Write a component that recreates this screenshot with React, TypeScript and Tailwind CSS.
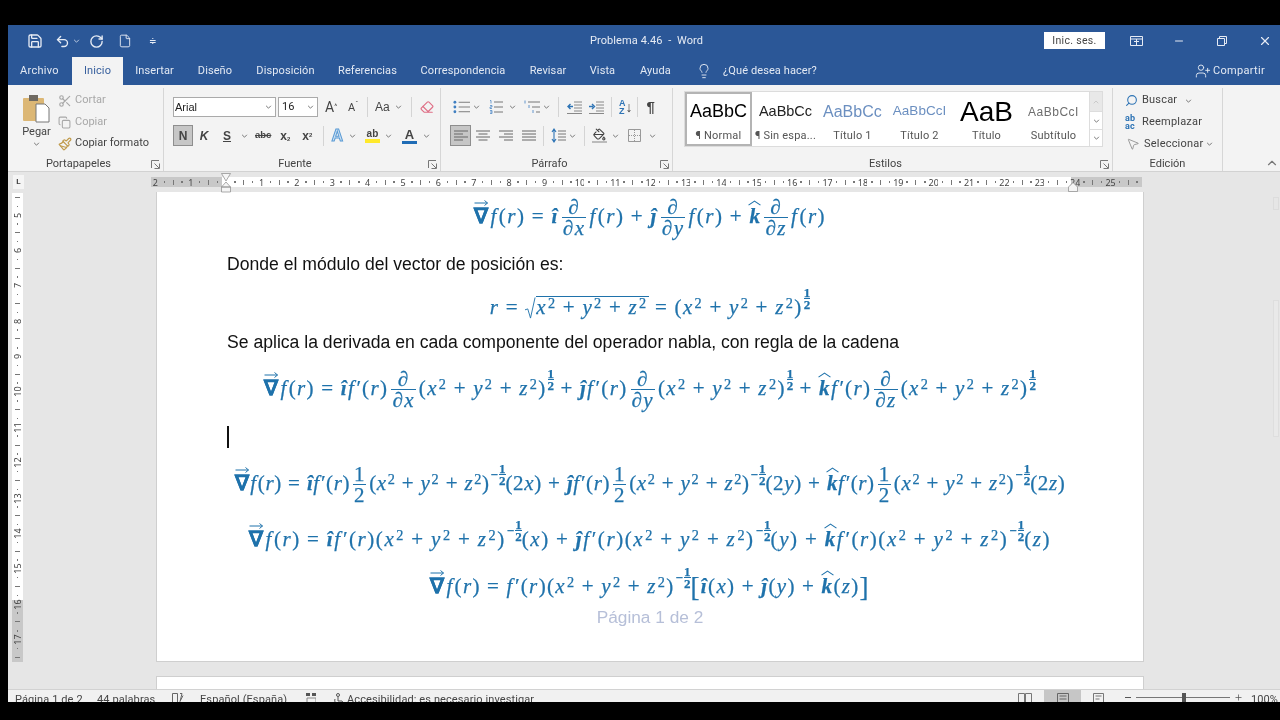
import React from "react";
import { Save, Undo2, RotateCcw, File, ChevronUp, Minus, Plus, X, Lightbulb, UserPlus, Scissors, Copy, Paintbrush, Eraser, PaintBucket, Search, MousePointer2 } from "lucide-react";

const Caret = ({ className = "" }: { className?: string }) => (
  <svg viewBox="0 0 8 5" className={"w-[7px] h-[4px] shrink-0 text-[#666] " + className} fill="none" stroke="currentColor" strokeWidth="1.1"><path d="M1 1l3 3 3-3" /></svg>
);
const Sep = ({ className = "" }: { className?: string }) => <span className={"w-px h-[20px] bg-[#d4d4d4] shrink-0 " + className} />;
const Launcher = () => (
  <svg viewBox="0 0 9 9" className="w-[9px] h-[9px] text-[#777]" fill="none" stroke="currentColor" strokeWidth="1"><path d="M.5 8V.5H8M8.5 8.5h-5M8.5 8.5v-5M8 8L3.5 3.5" /></svg>
);

const Group = ({ w, label, launch = true, children }: { w: string; label: string; launch?: boolean; children: React.ReactNode }) => (
  <div className={"flex flex-col h-[83px] shrink-0 border-r border-[#d6d6d6] mt-[3px] " + w}>
    <div className="h-[69px] min-h-0">{children}</div>
    <div className={"h-[14px] flex items-center relative text-[11px] text-[#444] justify-center " + (launch ? "pr-[14px]" : "")}>
      {label}
      {launch && <span className="absolute right-[3px] top-[3px]"><Launcher /></span>}
    </div>
  </div>
);

const Tab = ({ children, className = "" }: { children: React.ReactNode; className?: string }) => (
  <div className={"h-full flex items-center justify-center text-[11px] tracking-[0.1px] text-[#e3e9f3] shrink-0 " + className}>{children}</div>
);

const Bullets = () => (
  <svg viewBox="0 0 18 14" className="w-[17px] h-[14px]"><g fill="#3f7fc1"><circle cx="2" cy="2" r="1.5" /><circle cx="2" cy="7" r="1.5" /><circle cx="2" cy="12" r="1.5" /></g><path d="M6 2h12M6 7h12M6 12h12" stroke="#777" strokeWidth="1" /></svg>
);
const Numbered = () => (
  <svg viewBox="0 0 14 14" className="w-[14px] h-[14px]"><path d="M1 .5h1v3M1 5.5h2v1.500H1v1.500h2M1 10.5h2v3H1M1 12h2" stroke="#3f7fc1" strokeWidth=".7" fill="none" /><path d="M5 2h9M5 7h9M5 12h9" stroke="#777" strokeWidth="1" /></svg>
);
const Multi = () => (
  <svg viewBox="0 0 16 14" className="w-[16px] h-[14px]"><path d="M1 .5v3M5 5v3M9 10v3" stroke="#3f7fc1" strokeWidth=".8" /><path d="M4 2h12M8 7h8M12 12h4" stroke="#777" strokeWidth="1" /></svg>
);
const Indent = ({ inc }: { inc?: boolean }) => (
  <svg viewBox="0 0 16 13" className="w-[16px] h-[13px]"><path d="M8 1h8M8 4h8M8 7h8M8 10h8M1 12.500h15" stroke="#888" strokeWidth="1" /><path d={inc ? "M1 5.500h4M4 3l2.500 2.500L4 8" : "M7 5.500H2M4.500 3L2 5.500 4.500 8"} stroke="#2e74b5" strokeWidth="1.4" fill="none" /></svg>
);
const Align = ({ d }: { d: string }) => (
  <svg viewBox="0 0 14 11" className="w-[14px] h-[11px]"><path d={d} stroke="#666" strokeWidth="1" fill="none" /></svg>
);
const LineSp = () => (
  <svg viewBox="0 0 15 15" className="w-[15px] h-[15px]"><path d="M3 2v11M1 4l2-3 2 3M1 11l2 3 2-3" stroke="#2e74b5" strokeWidth="1.1" fill="none" /><path d="M7 3h8M7 6h8M7 9h8M7 12h8" stroke="#777" strokeWidth="1" /></svg>
);
const BorderI = () => (
  <svg viewBox="0 0 13 13" className="w-[13px] h-[13px]"><path d="M.5.5h12v12H.5z" stroke="#999" fill="none" /><path d="M6.500 1v11M1 6.500h11" stroke="#999" strokeDasharray="1 1" /></svg>
);

const Styl = ({ p, label, cls = "", active }: { p: string; label: string; cls?: string; active?: boolean }) => (
  <div className={"w-[67px] h-full flex flex-col items-center shrink-0 overflow-hidden " + (active ? "border-2 border-[#b4b4b4] " : "border-2 border-transparent ")}>
    <div className={"h-[35px] w-full flex items-center justify-center whitespace-nowrap overflow-hidden font-['Liberation_Sans'] " + cls}>{p}</div>
    <div className="text-[11px] leading-[14px] tracking-[0.2px] text-[#555] whitespace-nowrap">{label}</div>
  </div>
);

const hCells = Array.from({ length: 112 }, (_, k) => k - 8);
const vCells = Array.from({ length: 53 }, (_, k) => k + 18);

const RulerMark = ({ i, vertical }: { i: number; vertical?: boolean }) => {
  if (i === 0) return null;
  if (i % 4 === 0) return <span className={"text-[9px] leading-none font-['Noto_Sans'] text-[#444] " + (vertical ? "-rotate-90" : "")}>{Math.abs(i / 4)}</span>;
  if (i % 2 === 0) return <span className={"bg-[#777] " + (vertical ? "h-px w-[5px]" : "w-px h-[5px]")} />;
  return <span className="w-[1.5px] h-[1.5px] bg-[#777]" />;
};

/* ---------- math ---------- */
const U = ({ children }: { children: React.ReactNode }) => <span className="not-italic">{children}</span>;
const Op = ({ c }: { c: string }) => <span className="not-italic mx-[0.3em]">{c}</span>;
const S2 = () => <span className="not-italic text-[0.68em] leading-none mb-[0.75em] ml-[1px]">2</span>;
const Nab = () => (
  <span className="relative not-italic font-bold mr-[1px]">
    ∇
    <svg viewBox="0 0 14 6" className="absolute -top-[1px] left-0 w-[15px] h-[6px]" fill="none" stroke="currentColor" strokeWidth="1"><path d="M0 3h13M10 .5L13 3l-3 2.500" /></svg>
  </span>
);
const IH = () => <span className="font-bold">î</span>;
const JH = () => <span className="font-bold">ĵ</span>;
const KH = () => (
  <span className="relative font-bold">
    k
    <svg viewBox="0 0 12 5" className="absolute -top-[1px] -left-[1px] w-[13px] h-[6px]" fill="none" stroke="currentColor" strokeWidth="1"><path d="M.5 4.500L6 .7l5.500 3.800" /></svg>
  </span>
);
const Fr = ({ n, d }: { n: React.ReactNode; d: React.ReactNode }) => (
  <span className="inline-flex flex-col items-center mx-[3px] shrink-0">
    <span className="leading-[20px] h-[20px]">{n}</span>
    <span className="border-t border-current w-full text-center leading-[20px] h-[20px] px-[1px]">{d}</span>
  </span>
);
const Fxr = ({ p }: { p?: boolean }) => (
  <>
    <span className="mr-[1px]">f{p ? "′" : ""}</span>
    <U>(</U>r<U>)</U>
  </>
);
const Sq = () => (
  <>
    <U>(</U>x<S2 /><Op c="+" />y<S2 /><Op c="+" />z<S2 /><U>)</U>
  </>
);
const E = ({ neg }: { neg?: boolean }) => (
  <span className="inline-flex items-center not-italic font-bold text-[13px] mb-[19px] ml-[1px] tracking-normal">
    {neg && <span className="mr-[1px]">−</span>}
    <span className="inline-flex flex-col items-center leading-[11px]">
      <span>1</span>
      <span className="border-t border-current">2</span>
    </span>
  </span>
);
const Half = () => <Fr n={<U>1</U>} d={<U>2</U>} />;
const D = ({ v }: { v: string }) => <Fr n="∂" d={<>∂{v}</>} />;

const Line = ({ className, children }: { className: string; children: React.ReactNode }) => (
  <div className={"flex items-center justify-center italic text-[21px] text-[#1f72ab] [-webkit-text-stroke:0.25px_#1f72ab] font-['Liberation_Serif'] whitespace-nowrap shrink-0 " + className}>{children}</div>
);
const Body = ({ className, children }: { className: string; children: React.ReactNode }) => (
  <div className={"flex items-center pl-[70px] text-[17.6px] text-[#111] font-['Liberation_Sans'] whitespace-nowrap shrink-0 " + className}>{children}</div>
);

export default function App() {
  return (
    <div className="w-[1280px] h-[720px] bg-black pl-[8px] pt-[25px] pb-[18px] overflow-hidden font-['Roboto','Noto_Sans',sans-serif] blur-[0.35px]">
      <div className="w-full h-full flex flex-col">
        {/* title bar */}
        <div className="h-[32px] bg-[#2b5797] flex items-center shrink-0 text-[#e6ebf4]">
          <div className="flex items-center pl-[19px]">
            <Save size={16} strokeWidth={2} />
            <Undo2 size={15} strokeWidth={2.2} className="ml-[12px]" />
            <Caret className="ml-[3px] !text-[#cdd8ea]" />
            <RotateCcw size={15} strokeWidth={2.2} className="ml-[9px] scale-x-[-1]" />
            <File size={14} strokeWidth={1.6} className="ml-[14px]" />
            <span className="ml-[17px] text-[9px] leading-none">≑</span>
          </div>
          <div className="flex-1 text-center text-[11px] pl-[92px] tracking-[0.1px] whitespace-pre">Problema 4.46  -  Word</div>
          <div className="h-[17px] w-[61px] bg-white text-[#444] text-[10.5px] flex items-center justify-center mt-[-1px] mr-[25px] tracking-[0.3px]">Inic. ses.</div>
          <svg viewBox="0 0 13 10" className="w-[13px] h-[10px] mr-[30px]" fill="none" stroke="currentColor"><path d="M.5.5h12v9H.5zM.5 3h12M6.500 3v6M4 5.500h5" /></svg>
          <Minus size={12} className="mr-[32px]" />
          <svg viewBox="0 0 10 10" className="w-[10px] h-[10px] mr-[31px]" fill="none" stroke="currentColor"><path d="M.5 2.500h7v7h-7zM2.500 2.500v-2h7v7h-2" /></svg>
          <X size={14} className="mr-[8px]" />
        </div>
        {/* tabs */}
        <div className="h-[28px] bg-[#2b5797] flex items-center shrink-0">
          <Tab className="w-[64px] pl-[12px] !justify-start !tracking-[0.3px]">Archivo</Tab>
          <Tab className="w-[51px] bg-[#f3f3f3] !text-[#38609e]">Inicio</Tab>
          <Tab className="w-[63px]">Insertar</Tab>
          <Tab className="w-[58px]">Diseño</Tab>
          <Tab className="w-[83px]">Disposición</Tab>
          <Tab className="w-[81px]">Referencias</Tab>
          <Tab className="w-[110px]">Correspondencia</Tab>
          <Tab className="w-[60px]">Revisar</Tab>
          <Tab className="w-[49px]">Vista</Tab>
          <Tab className="w-[57px]">Ayuda</Tab>
          <Lightbulb size={16} strokeWidth={1.4} className="ml-[12px] text-[#e3e9f3]" />
          <Tab className="ml-[11px]">¿Qué desea hacer?</Tab>
          <div className="flex-1" />
          <UserPlus size={16} strokeWidth={1.4} className="text-[#e3e9f3]" />
          <Tab className="ml-[2px] mr-[15px] !tracking-[0.3px]">Compartir</Tab>
        </div>
        {/* ribbon */}
        <div className="h-[87px] bg-[#f3f3f3] border-b border-[#d2d2d2] flex shrink-0 text-[#444]">
          <Group w="w-[156px]" label="Portapapeles">
            <div className="flex h-full">
              <div className="w-[50px] pl-[7px] flex flex-col items-center pt-[7px] shrink-0">
                <svg viewBox="0 0 27 28" className="w-[27px] h-[28px]">
                  <rect x="0" y="3" width="21" height="23" rx="1" fill="#dcb775" />
                  <rect x="6" y="0" width="9" height="6" fill="#6f6a62" />
                  <path d="M13 9h9l4 4v14H13z" fill="#fff" stroke="#777" />
                </svg>
                <span className="text-[11px] leading-[14px] mt-[2px]">Pegar</span>
                <Caret className="mt-[3px]" />
              </div>
              <div className="flex flex-col text-[11px] pt-[2px]">
                <div className="h-[21px] flex items-center text-[#a8a8a8]"><Scissors size={14} className="mr-[3px]" />Cortar</div>
                <div className="h-[22px] flex items-center text-[#a8a8a8]"><Copy size={13} className="mr-[4px]" />Copiar</div>
                <div className="h-[21px] flex items-center whitespace-nowrap"><Paintbrush size={14} className="mr-[3px] text-[#c09a4a]" />Copiar formato</div>
              </div>
            </div>
          </Group>
          <Group w="w-[277px]" label="Fuente">
            <div className="pl-[9px] pt-[9px]">
              <div className="flex items-center h-[20px]">
                <div className="w-[103px] h-[20px] bg-white border border-[#aaa] flex items-center justify-between pl-[1px] pr-[3px] text-[11px] font-['Liberation_Sans'] text-[#222]">Arial<Caret /></div>
                <div className="ml-[2px] w-[40px] h-[20px] bg-white border border-[#aaa] flex items-center justify-between pl-[3px] pr-[3px] text-[11px] text-[#222]">16<Caret /></div>
                <span className="ml-[7px] w-[16px] text-[14px] leading-none">A<sup className="text-[7px]">^</sup></span>
                <span className="ml-[7px] w-[14px] text-[11px] leading-none">A<sup className="text-[7px]">ˇ</sup></span>
                <Sep className="ml-[5px]" />
                <span className="ml-[7px] text-[12px] font-['Liberation_Sans']">Aa</span>
                <Caret className="ml-[5px]" />
                <Sep className="ml-[9px]" />
                <Eraser size={14} className="ml-[8px] text-[#df6f86]" />
              </div>
              <div className="flex items-center h-[21px] mt-[8px] font-['Liberation_Sans'] text-[#444]">
                <span className="w-[20px] h-[21px] bg-[#c6c6c6] border border-[#8e8e8e] flex items-center justify-center text-[12px] font-bold">N</span>
                <span className="ml-[1px] w-[20px] text-center text-[12px] font-bold italic">K</span>
                <span className="ml-[3px] w-[20px] text-center text-[12px] font-bold underline">S</span>
                <Caret className="ml-[4px]" />
                <span className="ml-[7px] text-[9.5px] line-through font-bold">abc</span>
                <span className="ml-[4px] w-[20px] text-center text-[12px] font-bold">x<sub className="text-[6px]">2</sub></span>
                <span className="ml-[2px] w-[20px] text-center text-[12px] font-bold">x<sup className="text-[6px]">2</sup></span>
                <Sep className="ml-[6px]" />
                <span className="ml-[7px] text-[16px] font-bold text-[#cfe2f3] [-webkit-text-stroke:1px_#5a9bd5]">A</span>
                <Caret className="ml-[6px]" />
                <span className="ml-[9px] flex flex-col items-center text-[10px] leading-[11px] font-bold">ab<span className="w-[15px] h-[4px] bg-[#ffe92b]" /></span>
                <Caret className="ml-[5px]" />
                <span className="ml-[10px] flex flex-col items-center text-[13px] leading-[13px] font-bold">A<span className="w-[15px] h-[3px] bg-[#1f6cb5]" /></span>
                <Caret className="ml-[6px]" />
              </div>
            </div>
          </Group>
          <Group w="w-[232px]" label="Párrafo">
            <div className="pl-[9px] pt-[9px]">
              <div className="flex items-center h-[20px] pl-[3px]">
                <Bullets />
                <Caret className="ml-[3px]" />
                <span className="ml-[9px]"><Numbered /></span>
                <Caret className="ml-[6px]" />
                <span className="ml-[8px]"><Multi /></span>
                <Caret className="ml-[3px]" />
                <Sep className="ml-[8px]" />
                <span className="ml-[7px]"><Indent /></span>
                <span className="ml-[6px]"><Indent inc /></span>
                <Sep className="ml-[7px]" />
                <span className="ml-[7px] text-[9px] leading-[8px] font-['Liberation_Sans'] text-[#2e74b5] font-bold flex flex-col">A<span>Z</span></span>
                <span className="text-[14px] leading-none">↓</span>
                <Sep className="ml-[4px]" />
                <span className="ml-[9px] text-[15px] font-bold font-['Liberation_Sans']">¶</span>
              </div>
              <div className="flex items-center h-[21px] mt-[8px]">
                <span className="w-[21px] h-[21px] bg-[#c6c6c6] border border-[#8e8e8e] flex items-center justify-center"><Align d="M0 1h14M0 4h9M0 7h14M0 10h9" /></span>
                <span className="ml-[5px]"><Align d="M0 1h14M2.500 4h9M0 7h14M2.500 10h9" /></span>
                <span className="ml-[9px]"><Align d="M0 1h14M5 4h9M0 7h14M5 10h9" /></span>
                <span className="ml-[9px]"><Align d="M0 1h14M0 4h14M0 7h14M0 10h14" /></span>
                <Sep className="ml-[7px]" />
                <span className="ml-[7px]"><LineSp /></span>
                <Caret className="ml-[3px]" />
                <Sep className="ml-[8px]" />
                <span className="ml-[7px] flex flex-col items-center"><PaintBucket size={13} /><span className="w-[15px] h-[2px] bg-[#bbb]" /></span>
                <Caret className="ml-[5px]" />
                <span className="ml-[9px]"><BorderI /></span>
                <Caret className="ml-[8px]" />
              </div>
            </div>
          </Group>
          <Group w="w-[440px]" label="Estilos">
            <div className="pl-[11px] pt-[3px]">
              <div className="flex h-[56px] w-[419px] bg-white border border-[#dcdcdc]">
                <Styl active p="AaBbC" label="¶ Normal" cls="text-[18px] text-black" />
                <Styl p="AaBbCc" label="¶ Sin espa..." cls="text-[14.5px] text-[#222]" />
                <Styl p="AaBbCc" label="Título 1" cls="text-[16px] text-[#6b8fc0] !justify-start pl-[2px]" />
                <Styl p="AaBbCcI" label="Título 2" cls="text-[13.5px] text-[#6b8fc0]" />
                <Styl p="AaB" label="Título" cls="text-[28px] text-black" />
                <Styl p="AaBbCcI" label="Subtítulo" cls="text-[12px] tracking-[0.5px] text-[#6e6e6e]" />
                <div className="w-[13px] h-full flex flex-col border-l border-[#ddd] shrink-0 ml-auto">
                  <div className="h-[20px] bg-[#e8e8e8] flex items-center justify-center border-b border-[#ddd]"><ChevronUp size={8} className="text-[#bbb]" /></div>
                  <div className="h-[18px] flex items-center justify-center border-b border-[#ddd]"><Caret /></div>
                  <div className="h-[16px] flex items-center justify-center"><Caret /></div>
                </div>
              </div>
            </div>
          </Group>
          <Group w="w-[110px]" label="Edición" launch={false}>
            <div className="flex flex-col text-[11px] tracking-[0.2px] pl-[12px] pt-[2px]">
              <div className="h-[21px] flex items-center"><Search size={13} className="mr-[4px] text-[#2e74b5] scale-x-[-1]" />Buscar<Caret className="ml-[8px]" /></div>
              <div className="h-[22px] flex items-center"><span className="w-[17px] text-[9px] leading-[8px] text-[#2e74b5] font-bold">ab<br />ac</span>Reemplazar</div>
              <div className="h-[22px] flex items-center"><MousePointer2 size={14} strokeWidth={1.2} className="mr-[4px] ml-[1px] text-[#777]" />Seleccionar<Caret className="ml-[3px]" /></div>
            </div>
          </Group>
          <div className="flex-1 flex items-end justify-end pr-[1px] pb-[1px]"><ChevronUp size={14} className="text-[#777]" /></div>
        </div>
        {/* horizontal ruler */}
        <div className="h-[20px] bg-[#e6e6e6] flex items-center shrink-0 relative">
          <div className="ml-[5px] w-[11px] h-[14px] bg-[#f5f5f5] flex items-center justify-center text-[8px] font-bold text-[#444] leading-none shrink-0">L</div>
          <div className="ml-[127px] flex h-[10px] shrink-0">
            {hCells.map((i) => (
              <div key={i} className={"w-[8.85px] h-full flex items-center justify-center overflow-visible shrink-0 " + (i < 0 || i > 95 ? "bg-[#c8c8c8]" : "bg-white")}>
                <RulerMark i={i} />
              </div>
            ))}
          </div>
          <svg viewBox="0 0 10 20" className="absolute left-[213px] top-[1px] w-[10px] h-[20px]" fill="#f5f5f5" stroke="#888" strokeWidth=".7"><path d="M.5.500h9L5 8zM.5 14L5 9l4.500 5zM.5 14h9v5h-9z" /></svg>
          <svg viewBox="0 0 10 10" className="absolute left-[1060px] top-[10px] w-[10px] h-[10px]" fill="#f5f5f5" stroke="#888" strokeWidth=".7"><path d="M.5 9.500V5L5 .5 9.500 5v4.500z" /></svg>
        </div>
        {/* canvas */}
        <div className="flex-1 min-h-0 bg-[#e6e6e6] flex overflow-hidden">
          <div className="w-[148px] shrink-0 pl-[4px]">
            <div className="w-[11px] flex flex-col pt-[1px]">
              {vCells.map((i) => (
                <div key={i} className={"h-[8.85px] w-full flex items-center justify-center shrink-0 " + (i >= 64 ? "bg-[#c8c8c8]" : "bg-white")}>
                  <RulerMark i={i} vertical />
                </div>
              ))}
            </div>
          </div>
          <div className="w-[988px] shrink-0 flex flex-col">
            <div className="h-[470px] bg-white border-l border-r border-b border-[#cfcfcf] flex flex-col overflow-hidden shrink-0">
              <Line className="h-[50px] tracking-[1.5px]">
                <Nab /><Fxr /><Op c="=" /><IH /><D v="x" /><Fxr /><Op c="+" /><JH /><D v="y" /><Fxr /><Op c="+" /><KH /><D v="z" /><Fxr />
              </Line>
              <Body className="h-[44px]">Donde el módulo del vector de posición es:</Body>
              <Line className="h-[44px] tracking-[1.4px]">
                r<Op c="=" />
                <svg viewBox="0 0 12 24" className="w-[11px] h-[24px] mb-[1px]" fill="none" stroke="currentColor" strokeWidth="1"><path d="M0 14l3-1 3 10 5-22.500" /></svg>
                <span className="flex items-center border-t border-current h-[23px] mt-[-1px] pr-[1px]">x<S2 /><Op c="+" />y<S2 /><Op c="+" />z<S2 /></span>
                <Op c="=" /><Sq /><E />
              </Line>
              <Body className="h-[24px]">Se aplica la derivada en cada componente del operador nabla, con regla de la cadena</Body>
              <Line className="h-[70px] tracking-[1.36px]">
                <Nab /><Fxr /><Op c="=" /><IH /><Fxr p /><D v="x" /><Sq /><E /><Op c="+" /><JH /><Fxr p /><D v="y" /><Sq /><E /><Op c="+" /><KH /><Fxr p /><D v="z" /><Sq /><E />
              </Line>
              <div className="h-[26px] flex items-center pl-[70px] shrink-0"><span className="w-[1.5px] h-[22px] bg-[#111]" /></div>
              <Line className="h-[68px] tracking-[0.62px]">
                <Nab /><Fxr /><Op c="=" /><IH /><Fxr p /><Half /><Sq /><E neg /><U>(2</U>x<U>)</U><Op c="+" /><JH /><Fxr p /><Half /><Sq /><E neg /><U>(2</U>y<U>)</U><Op c="+" /><KH /><Fxr p /><Half /><Sq /><E neg /><U>(2</U>z<U>)</U>
              </Line>
              <Line className="h-[44px] tracking-[1.58px]">
                <Nab /><Fxr /><Op c="=" /><IH /><Fxr p /><Sq /><E neg /><U>(</U>x<U>)</U><Op c="+" /><JH /><Fxr p /><Sq /><E neg /><U>(</U>y<U>)</U><Op c="+" /><KH /><Fxr p /><Sq /><E neg /><U>(</U>z<U>)</U>
              </Line>
              <Line className="h-[50px] tracking-[1.35px]">
                <Nab /><Fxr /><Op c="=" /><Fxr p /><Sq /><E neg />
                <span className="not-italic text-[27px] leading-none font-light">[</span>
                <IH /><U>(</U>x<U>)</U><Op c="+" /><JH /><U>(</U>y<U>)</U><Op c="+" /><KH /><U>(</U>z<U>)</U>
                <span className="not-italic text-[27px] leading-none font-light">]</span>
              </Line>
              <div className="h-[11px] flex items-center justify-center text-[17.3px] text-[#b6bfd8] font-['Liberation_Sans'] shrink-0">Página 1 de 2</div>
            </div>
            <div className="h-[14px] shrink-0" />
            <div className="flex-1 bg-white border-l border-r border-t border-[#cfcfcf]" />
          </div>
          <div className="flex-1 flex justify-end pr-[1px]">
            <div className="w-[6px] flex flex-col">
              <div className="h-[13px] mt-[5px] border border-[#dcdcdc]" />
              <div className="h-[137px] mt-[90px] border border-[#dedede] bg-[#e9e9e9]" />
            </div>
          </div>
        </div>
        {/* status bar */}
        <div className="h-[13px] bg-[#f1f1f1] border-t border-[#d2d2d2] flex items-start pt-[2px] shrink-0 text-[11px] tracking-[0.1px] leading-[15px] text-[#444] overflow-hidden whitespace-nowrap">
          <span className="ml-[7px] w-[82px] shrink-0">Página 1 de 2</span>
          <span className="w-[75px] shrink-0">44 palabras</span>
          <svg viewBox="0 0 14 12" className="w-[14px] h-[12px] shrink-0 mt-[1px]" fill="none" stroke="#666"><path d="M.5.5h5v10h-5zM8 .5h2l-2 8 3-6" /></svg>
          <span className="ml-[14px] w-[106px] shrink-0">Español (España)</span>
          <svg viewBox="0 0 10 12" className="w-[10px] h-[12px] shrink-0 mt-[1px]"><rect x="0" y="0" width="4" height="3" fill="#555" /><rect x="6" y="0" width="4" height="3" fill="#555" /><path d="M1 5h9v6H1z" stroke="#888" fill="none" /></svg>
          <svg viewBox="0 0 12 12" className="w-[12px] h-[12px] shrink-0 ml-[18px] mt-[1px]" fill="none" stroke="#555"><circle cx="4" cy="2" r="1.500" /><path d="M4 4v4h4l2 3M1 6c-1 3 1 5 4 5" /></svg>
          <span className="ml-[1px] w-[671px] shrink-0">Accesibilidad: es necesario investigar</span>
          <svg viewBox="0 0 14 12" className="w-[14px] h-[12px] shrink-0 mt-[1px]" fill="none" stroke="#777"><path d="M.5.5h6v11h-6zM7.500.5h6v11h-6z" /></svg>
          <div className="ml-[12px] w-[37px] h-[13px] bg-[#c6c6c6] flex justify-center shrink-0 pt-[3px] -mt-[2px]">
            <svg viewBox="0 0 12 12" className="w-[12px] h-[12px]" fill="none" stroke="#666"><path d="M.5.5h11v11H.5zM2.500 3h7M2.500 6h7" /></svg>
          </div>
          <svg viewBox="0 0 13 12" className="w-[13px] h-[12px] shrink-0 ml-[12px] mt-[1px]" fill="none" stroke="#777"><path d="M.5.5h10v11H.5zM2.500 3h6M2.500 6h4" /></svg>
          <span className="ml-[19px] w-[6px] h-px bg-[#555] mt-[5px] shrink-0" />
          <div className="ml-[5px] w-[94px] h-px bg-[#777] mt-[5px] shrink-0 relative">
            <span className="absolute left-[46px] -top-[4px] w-[4px] h-[9px] bg-[#555]" />
          </div>
          <Plus size={9} className="ml-[4px] mt-[1px] shrink-0 text-[#555]" />
          <span className="ml-[8px] shrink-0">100%</span>
        </div>
      </div>
    </div>
  );
}
